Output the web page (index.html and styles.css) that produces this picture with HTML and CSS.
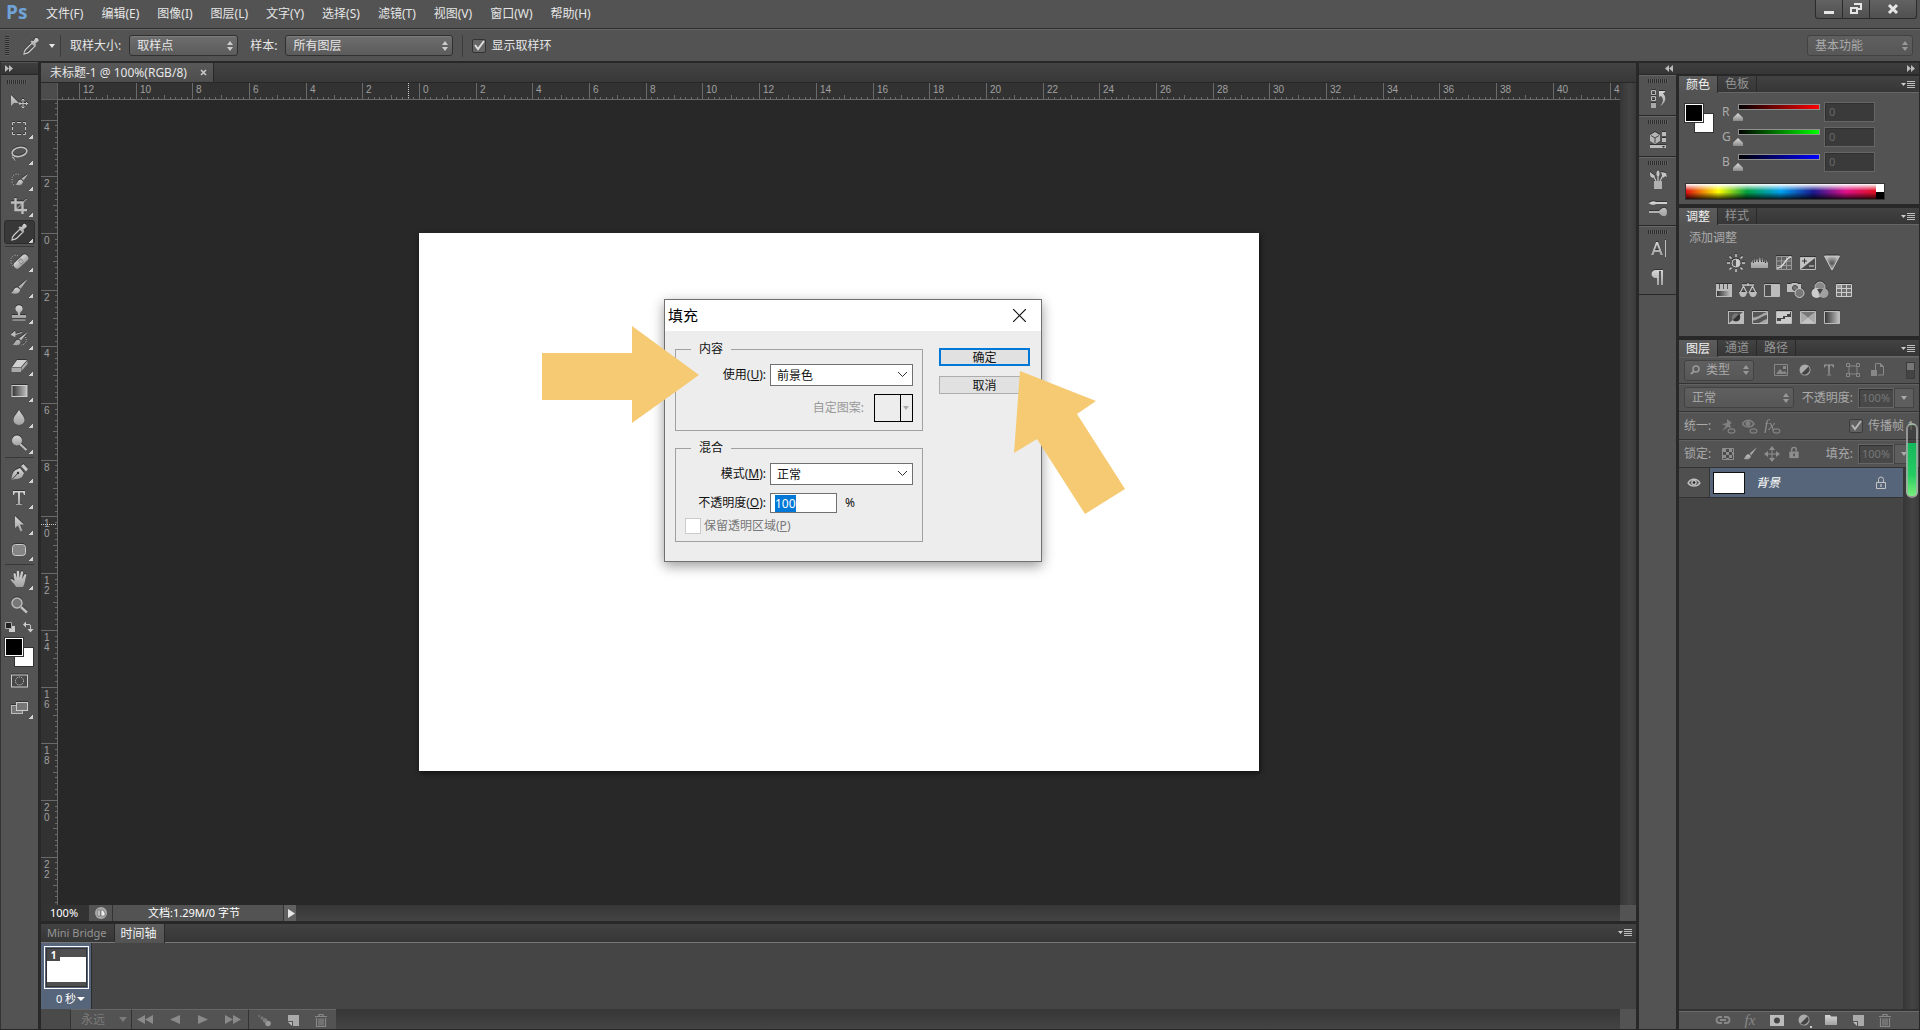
FILE: index.html
```html
<!DOCTYPE html>
<html lang="zh-CN">
<head>
<meta charset="utf-8">
<title>未标题-1</title>
<link rel="stylesheet" href="styles.css">
</head>
<body>
<svg class="defs" aria-hidden="true">
  <defs>
    <linearGradient id="lg" x1="0" y1="0" x2="0" y2="1"><stop offset="0" stop-color="#d6d6d6"/><stop offset="1" stop-color="#a2a2a2"/></linearGradient>
    <linearGradient id="hg" x1="0" y1="0" x2="1" y2="0"><stop offset="0" stop-color="#333"/><stop offset="1" stop-color="#c4c4c4"/></linearGradient>
    <symbol id="move" viewBox="0 0 20 20"><path d="M2 3v11l3-3h5z" fill="url(#lg)"/><path d="M14 7v9M10 11.500h9M12.500 8.500l1.500-1.500 1.500 1.500M12.500 14.500l1.500 1.500 1.500-1.500M11.500 10l-1.500 1.500 1.500 1.500M17 10l1.500 1.500-1.500 1.500" fill="none" stroke="#c4c4c4"/></symbol>
    <symbol id="marquee" viewBox="0 0 20 20"><path d="M3.500 7V4.500H6M8 4.500h4M14 4.500h2.500V7M16.500 9v3M16.500 14v2.500H14M12 16.500H8M6 16.500H3.500V14M3.500 12V9" fill="none" stroke="#c4c4c4"/></symbol>
    <symbol id="lasso" viewBox="0 0 20 20"><ellipse cx="10.500" cy="8" rx="7.500" ry="4.500" transform="rotate(-12 10 8)" fill="none" stroke="#c0c0c0" stroke-width="1.600"/><path d="M3 11c2 0 3 1 2 2.500s-2 0-1.500-1M4.500 13.500c1 1 .5 2 1.500 3" fill="none" stroke="#c0c0c0"/></symbol>
    <symbol id="quick" viewBox="0 0 20 20"><path d="M10 4.500a5 5 0 0 0-7 3v4a5 5 0 0 0 3 4" fill="none" stroke="#ccc" stroke-dasharray="1 1.500"/><path d="M19 4l-6.500 4.500 2 2z" fill="url(#lg)"/><path d="M12 9.500c-3 0-3 3-5.500 5 3 1.500 7 1 7.500-3z" fill="url(#lg)"/></symbol>
    <symbol id="crop" viewBox="0 0 20 20"><path d="M6.500 2v12H18M2 6.500h11.500V18" fill="none" stroke="#bdbdbd" stroke-width="2.400"/><path d="M6 14.500L17.500 3" stroke="#c0c0c0"/></symbol>
    <symbol id="dropper" viewBox="0 0 20 20"><path d="M3 18c0-3 1-4 2-5l6-6 3 3-6 6c-2 2-3 1-5 2z" fill="none" stroke="#ccc" stroke-width="1.200"/><path d="M9.500 5.500l1-1 2 .5 2-3c1-1 4 1 3 3l-3 2.500.8 1.800-1.200 1.200z" fill="url(#lg)"/></symbol>
    <symbol id="heal" viewBox="0 0 20 20"><path d="M9 4.500a5 5 0 0 0-7 3v4a5 5 0 0 0 3 4" fill="none" stroke="#ccc" stroke-dasharray="1 1.500"/><rect x="3.500" y="7" width="17" height="7" rx="3.200" transform="rotate(-42 12 10.500)" fill="url(#lg)"/><path d="M9 10l3-3 3 4-3 3z" fill="#8b8b8b"/><path d="M10.500 10.500h3M12 9v3" stroke="#ddd" stroke-dasharray="1 1"/></symbol>
    <symbol id="brush" viewBox="0 0 20 20"><path d="M18.500 2L9.500 9.500l2 2.500z" fill="url(#lg)"/><path d="M8.500 10.500C5 10 5 14 2 16c4 1.500 9 1 9-3.500z" fill="url(#lg)"/></symbol>
    <symbol id="stamp" viewBox="0 0 20 20"><path d="M8.500 9a3.600 3.600 0 1 1 3 0l-.5 3H17v3H3v-3h6z" fill="url(#lg)"/><path d="M3.500 17h13" stroke="#c4c4c4"/></symbol>
    <symbol id="history" viewBox="0 0 20 20"><path d="M18.500 3L10 9.500l2 2zM9.500 10.500c-3 0-3 3-6 5 4 1.500 8 1 8-3z" fill="url(#lg)"/><path d="M2 5.500l4-3v5zM5 5.500c4 0 6-2 8-2" fill="#bbb" stroke="#bbb"/><path d="M16.500 8c2 4 0 7-4 8" fill="none" stroke="#bbb" stroke-dasharray="1 1"/></symbol>
    <symbol id="eraser" viewBox="0 0 20 20"><path d="M8 5h10l-6 7H3z" fill="#d0d0d0"/><path d="M2.500 12.500H12V17H2.500zM12.500 12.500L18.500 5.500V9l-6 7z" fill="#a9a9a9"/></symbol>
    <symbol id="gradient" viewBox="0 0 20 20"><rect x="3" y="4.500" width="15" height="11" fill="url(#hg)" stroke="#d0d0d0"/></symbol>
    <symbol id="blur" viewBox="0 0 20 20"><path d="M10 2c0 3-5.500 6.500-5.500 11a5.500 5 0 0 0 11 0c0-4.500-5.500-8-5.500-11z" fill="url(#lg)"/></symbol>
    <symbol id="dodge" viewBox="0 0 20 20"><circle cx="8" cy="7.500" r="5" fill="url(#lg)"/><path d="M11 11l6.500 6" stroke="#c0c0c0" stroke-width="2"/></symbol>
    <symbol id="pen" viewBox="0 0 20 20"><path d="M2.500 18c0-4 1-8 4-10l4.500-2 4 5-2 4c-3 2.500-7 1.500-10.500 3z" fill="url(#lg)"/><path d="M12 4l2.500-2L19 7l-2 2.500z" fill="#c8c8c8"/><path d="M3 17.500l5.500-6" stroke="#444"/><circle cx="9" cy="11" r="1.200" fill="#333"/></symbol>
    <symbol id="type" viewBox="0 0 20 20"><path d="M4 3h12v4h-1l-1-2.500h-3V15.500l2 .5v1H7v-1l2-.5V4.500H6L5 7H4z" fill="url(#lg)"/></symbol>
    <symbol id="arrow" viewBox="0 0 20 20"><path d="M6 2v12l3-2.500 2.500 6 2-1-2.500-6h4z" fill="url(#lg)"/></symbol>
    <symbol id="rrect" viewBox="0 0 20 20"><rect x="3.500" y="4.500" width="13" height="11" rx="3" fill="#858585" stroke="#ccc"/></symbol>
    <symbol id="hand" viewBox="0 0 20 20"><path d="M7 18c-1-3-4-4.500-5.500-7.500 1-1.500 3 .5 4 1.500L4.500 5c.5-1.500 2-1 2.200 0L8 9l-.2-6.500c.5-1.500 2-1 2.200 0L10.500 9 12 3c.7-1.200 2-.6 2 .6L13 10l2.500-4.500c1-1 2-.2 1.700 1C16 11 16 15 14 18z" fill="url(#lg)"/></symbol>
    <symbol id="zoom" viewBox="0 0 20 20"><circle cx="8" cy="8" r="5" fill="#777" stroke="#bbb" stroke-width="1.500"/><path d="M12 12l6 5.500" stroke="#c0c0c0" stroke-width="2.400"/></symbol>
    <symbol id="mask" viewBox="0 0 20 20"><rect x="2.500" y="4" width="16" height="12" fill="#484848" stroke="#ccc"/><circle cx="10.500" cy="10" r="4" fill="none" stroke="#ddd" stroke-dasharray="1 1"/></symbol>
    <symbol id="screen" viewBox="0 0 20 20"><rect x="2.500" y="7.500" width="11" height="8" fill="#777" stroke="#bbb"/><rect x="7.500" y="4.500" width="11" height="8" fill="#777" stroke="#ccc"/></symbol>
    <symbol id="mini" viewBox="0 0 12 12"><path d="M5 5h6v6H5z" fill="#ccc"/><path d="M1.500 1.500h6v6h-6z" fill="#222" stroke="#aaa"/></symbol>
    <symbol id="swap" viewBox="0 0 12 12"><path d="M3.500 3.500H7q1.500 0 1.500 1.500v4" fill="none" stroke="#ccc"/><path d="M4 .5v6L1 3.500zM5.500 8h6l-3 3.500z" fill="#ccc"/></symbol>
    <symbol id="menu" viewBox="0 0 14 8"><path d="M0 2h5L2.500 5z" fill="#ccc"/><path d="M6 .5h8M6 2.500h8M6 4.500h8M6 6.500h8" stroke="#bdbdbd"/></symbol>
    <symbol id="hist" viewBox="0 0 20 20"><path d="M3.500 1.500h4v4h-4zM3.500 7.500h4v4h-4z" fill="none" stroke="#bbb"/><path d="M3 14h5v5H3z" fill="#aaa"/><path d="M11 2h6v1l-2 1.500C19 8 18 14 12 17c3-4 4-7 1-10l-2 1z" fill="url(#lg)"/></symbol>
    <symbol id="props" viewBox="0 0 20 20"><path d="M2 5l5-3 5 3v6l-5 3-5-3z" fill="#b5b5b5"/><path d="M3 5.500l4 2.500 4-2.500M7 8v5" fill="none" stroke="#444"/><path d="M14 2h4v4h-4zM14 8h4v4h-4zM2 15h16v3H2z" fill="#bbb"/><path d="M14 16h3l-1.500 2z" fill="#333"/></symbol>
    <symbol id="brushes" viewBox="0 0 20 20"><path d="M6 11h8v8H6z" fill="#b0b0b0"/><path d="M8 11L5 5M10 11V5M12 11l3-6" stroke="#bbb" stroke-width="1.500"/><path d="M2 2l5 4-2 2c-3-1-3-3-3-6zM10 0c2 2 2 4 1 6H9c-1-2-1-4 1-6zM13 2l5 1 1 4c-2-2-3 0-4 1z" fill="#c4c4c4"/></symbol>
    <symbol id="presets" viewBox="0 0 20 20"><path d="M0 5c3 0 4-3 8-1h11v2H8C4 8 3 6 0 5zM1 13h10c3-4 8-5 8 1s-5 5-8 1H1z" fill="url(#lg)"/></symbol>
    <symbol id="char" viewBox="0 0 20 20"><path d="M3 16L8 3h2l5 13h-2.500l-1-3H6.500l-1 3zM7 11h4L9 5.500z" fill="url(#lg)"/><path d="M17.500 1v17" stroke="#bbb"/></symbol>
    <symbol id="para" viewBox="0 0 20 20"><path d="M15 3H8c-6 0-6 8 0 8h1v7h2V4h2v14h2z" fill="url(#lg)"/></symbol>
    <symbol id="a1" viewBox="0 0 18 18"><circle cx="9" cy="9" r="4" fill="#555" stroke="#c8c8c8"/><path d="M9 5v8a4 4 0 0 0 0-8z" fill="#ccc"/><path d="M9 0v3M9 15v3M0 9h3M15 9h3M2.500 2.500l2 2M13.500 13.500l2 2M15.500 2.500l-2 2M2.500 15.500l2-2" stroke="#ccc" stroke-width="1.500"/></symbol>
    <symbol id="a2" viewBox="0 0 18 18"><path d="M0 14V7l1 2V5l1 4h1V4l1 4h1V4l1 4V4l1 4h1V2l1 5V3l1 5h1V3l1 5h1V5l1 4h1V5l1 4 1-2v7z" fill="url(#lg)"/></symbol>
    <symbol id="a3" viewBox="0 0 18 18"><path d="M1.500 2.500h15v13h-15zM6.500 2v13M11.500 2v13M2 7h15M2 11.500h15" fill="#626262" stroke="#999"/><path d="M2 14C10 14 9 4 16 3" fill="none" stroke="#ddd" stroke-width="1.500"/></symbol>
    <symbol id="a4" viewBox="0 0 18 18"><path d="M1 3h16v13H1z" fill="#4a4a4a"/><path d="M2 15V4h14z" fill="#c4c4c4"/><path d="M1.500 3.500h15v12h-15z" fill="none" stroke="#bbb"/><path d="M3 7h5M5.500 4.500v5" stroke="#333"/><path d="M10 12h5" stroke="#ddd"/></symbol>
    <radialGradient id="rg"><stop offset="0" stop-color="#555"/><stop offset="1" stop-color="#bbb"/></radialGradient>
    <symbol id="a5" viewBox="0 0 18 18"><path d="M1.500 2h15L9 16z" fill="url(#rg)" stroke="#ccc"/></symbol>
    <symbol id="b1" viewBox="0 0 18 18"><path d="M1 3h16v13H1z" fill="#bbb"/><path d="M2 10h14v5H2z" fill="url(#hg)"/><path d="M4.500 3v5M8.500 3v5M12.500 3v5" stroke="#555"/></symbol>
    <symbol id="b2" viewBox="0 0 18 18"><path d="M3 4h12M9 2v3M4.500 5L1 12M4.500 5L8 12M13.500 5L10 12M13.500 5l3.500 7" fill="none" stroke="#c4c4c4" stroke-width="1.300"/><path d="M0 11h8q-.5 5-4 5t-4-5zM10 11h8q-.5 5-4 5t-4-5z" fill="#bbb"/></symbol>
    <symbol id="b3" viewBox="0 0 18 18"><path d="M1.500 3.500h15v12h-15z" fill="#4d4d4d" stroke="#bbb"/><path d="M8 4h9v11H8z" fill="#bbb"/></symbol>
    <symbol id="b4" viewBox="0 0 18 18"><path d="M0 3h4l1-1h5l1 1h3v8H0z" fill="#bdbdbd"/><circle cx="8" cy="7" r="2.500" fill="#777" stroke="#444"/><circle cx="12.500" cy="12" r="4.500" fill="#777" stroke="#ccc"/></symbol>
    <symbol id="b5" viewBox="0 0 18 18"><circle cx="9" cy="6" r="5" fill="#888" stroke="#bbb"/><circle cx="5.500" cy="12" r="5" fill="#ccc"/><circle cx="12.500" cy="12" r="5" fill="#a0a0a0"/><path d="M6 8h6l-3 5z" fill="#444"/></symbol>
    <symbol id="b6" viewBox="0 0 18 18"><path d="M1.500 3.500h15v12h-15z" fill="#6d6d6d" stroke="#ccc"/><path d="M2 4h5v4H2z" fill="#999"/><path d="M6.500 3v12M11.500 3v12M2 7.500h15M2 11.500h15" stroke="#ccc"/></symbol>
    <symbol id="c1" viewBox="0 0 18 18"><path d="M1 3h16v13H1z" fill="#bbb"/><path d="M2 15V4h14z" fill="#555"/><circle cx="9" cy="9.500" r="4" fill="#777"/><path d="M6 12l6-6a4 4 0 0 1-6 6z" fill="#333"/></symbol>
    <symbol id="c2" viewBox="0 0 18 18"><path d="M1.500 3.500h15v12h-15z" fill="#555" stroke="#bbb"/><path d="M2 9.500c6 0 8-4 14-5.500v3c-6 1-8 5-14 5.500zM8 15c3-1 4-3 8-4v4z" fill="#a7a7a7"/></symbol>
    <symbol id="c3" viewBox="0 0 18 18"><path d="M1.500 3.500h15v12h-15z" fill="#444" stroke="#bbb"/><path d="M2 4h13v2h-3v2H8v2H2zM16 9v6H2v-2h4v-2h4V9z" fill="#ccc"/></symbol>
    <symbol id="c4" viewBox="0 0 18 18"><path d="M1.500 3.500h15v12h-15z" fill="#777" stroke="#bbb"/><path d="M2 4l7 5.500L2 15zM16 4L9 9.500l7 5.500z" fill="#aaa"/><path d="M2 15l7-5.500L16 15z" fill="#c4c4c4"/></symbol>
    <symbol id="c5" viewBox="0 0 18 18"><path d="M1.500 3.500h15v12h-15z" fill="url(#hg)" stroke="#bbb"/></symbol>
    <symbol id="pic" viewBox="0 0 16 16"><path d="M1.500 2.500h13v11h-13z" fill="none" stroke="#888"/><path d="M3 12l4-5 3 3 2-1 2 3zM10 4h3v3h-3z" fill="#888"/></symbol>
    <symbol id="adj" viewBox="0 0 16 16"><circle cx="8" cy="8" r="5.500" fill="#aaa"/><path d="M4.500 11.500l7-7a5 5 0 0 1-7 7z" fill="#444"/></symbol>
    <symbol id="shape" viewBox="0 0 16 16"><path d="M4 4h8v8H4z" fill="none" stroke="#888"/><path d="M1.500 1.500h3v3h-3zM11.500 1.500h3v3h-3zM1.500 11.500h3v3h-3zM11.500 11.500h3v3h-3z" fill="#555" stroke="#888"/></symbol>
    <symbol id="smart" viewBox="0 0 16 16"><path d="M6.500 8V1.500h5l3 3v8.500H9" fill="none" stroke="#888"/><path d="M11 1v4h4zM2 8h6v6H2z" fill="#888"/></symbol>
    <symbol id="chain" viewBox="0 0 16 16"><path d="M7 5H4.500a3 3 0 0 0 0 6H7M9 5h2.500a3 3 0 0 1 0 6H9M5 8h6" fill="none" stroke="#888" stroke-width="1.800"/></symbol>
    <symbol id="pin" viewBox="0 0 16 16"><path d="M7 1l5 4-2 1 1 4-3-1-6 4 4-5-4-2 5-1z" fill="#888"/><rect x="8" y="11" width="7" height="4" rx="2" fill="none" stroke="#999"/></symbol>
    <symbol id="eyelink" viewBox="0 0 16 16"><path d="M0 6c4-5 9-5 12 0-3 4-8 4-12 0z" fill="none" stroke="#888" stroke-width="1.500"/><circle cx="6" cy="5.500" r="2.500" fill="#888"/><rect x="8" y="11" width="7" height="4" rx="2" fill="#555" stroke="#999"/></symbol>
    <symbol id="linkbit" viewBox="0 0 16 16"><rect x="8" y="11" width="7" height="4" rx="2" fill="#555" stroke="#999"/></symbol>
    <symbol id="checks" viewBox="0 0 16 16"><path d="M2.500 2.500h11v11h-11z" fill="#4a4a4a" stroke="#999"/><path d="M3 3h3v3H3zM9 3h3v3H9zM6 6h3v3H6zM3 9h3v3H3zM9 9h3v3H9zM12 6h1v3h-1zM6 12h3v1H6z" fill="#999"/></symbol>
    <symbol id="cross" viewBox="0 0 16 16"><path d="M8 2v12M2 8h12" stroke="#999"/><path d="M8 0l3 4H5zM8 16l3-4H5zM0 8l4-3v6zM16 8l-4-3v6z" fill="#999"/></symbol>
    <symbol id="lock" viewBox="0 0 12 14"><path d="M3.500 6V4a2.500 2.500 0 0 1 5 0v2" fill="none" stroke="currentColor" stroke-width="1.500"/><path d="M1 6h10v7H1z" fill="currentColor"/><path d="M6 8v3" stroke="#444" stroke-width="1.500"/></symbol>
    <symbol id="lock2" viewBox="0 0 12 14"><path d="M3.500 6V3.500a2.500 2.500 0 0 1 5 0V6M1.500 6.500h9v6h-9z" fill="none" stroke="#c4c4c4"/><path d="M6 8v3" stroke="#ddd"/></symbol>
    <symbol id="eye" viewBox="0 0 14 12"><path d="M1 6c3-5 9-5 12 0-3 4-9 4-12 0z" fill="#555" stroke="#c0c0c0" stroke-width="1.300"/><circle cx="7" cy="5.500" r="2.800" fill="#bbb"/><circle cx="7" cy="5.500" r="1.300" fill="#222"/></symbol>
    <symbol id="maskadd" viewBox="0 0 16 16"><path d="M1 3h14v11H1z" fill="#bbb"/><circle cx="8" cy="8.500" r="3" fill="#444"/></symbol>
    <symbol id="folder" viewBox="0 0 16 16"><path d="M2 3h5l1 1.500h6V13H2z" fill="url(#lg)"/></symbol>
    <symbol id="newl" viewBox="0 0 16 16"><path d="M3 3h11v11H8V9H3z" fill="#aaa"/><path d="M3 10h4v4z" fill="#bbb"/></symbol>
    <symbol id="trash" viewBox="0 0 16 16"><path d="M2 4.500h12M6 4V2.500h4V4M3.500 6v8.500h9V6M6 6.500v7M8 6.500v7M10 6.500v7" fill="none" stroke="#888" stroke-width="1.200"/></symbol>
    <symbol id="tween" viewBox="0 0 16 16"><circle cx="12" cy="11.500" r="2.800" fill="#999"/><circle cx="9" cy="8.500" r="2.200" fill="#808080"/><circle cx="6" cy="6" r="1.700" fill="#747474"/><circle cx="3" cy="4" r="1.300" fill="#6a6a6a"/></symbol>
  </defs>
</svg>

<div class="app">
  <header class="menubar">
    <span class="logo">Ps</span>
    <nav class="menus">
      <button>文件(F)</button><button>编辑(E)</button><button>图像(I)</button><button>图层(L)</button><button>文字(Y)</button><button>选择(S)</button><button>滤镜(T)</button><button>视图(V)</button><button>窗口(W)</button><button>帮助(H)</button>
    </nav>
    <div class="winbtns">
      <button aria-label="最小化"><svg width="12" height="12"><path d="M1 8h10v3H1z" fill="#e6e6e6"/></svg></button>
      <button aria-label="还原"><svg width="14" height="12"><path d="M5 1h7v5H9M2 5h6v5H2z" fill="none" stroke="#e6e6e6" stroke-width="2"/></svg></button>
      <button class="winclose" aria-label="关闭"><svg width="12" height="12"><path d="M2 2l8 8M10 2l-8 8" stroke="#e6e6e6" stroke-width="3"/></svg></button>
    </div>
  </header>

  <div class="options">
    <i class="vgrip"></i>
    <svg class="ico optico"><use href="#dropper"/></svg>
    <i class="tri"></i>
    <i class="vsep"></i>
    <label for="size">取样大小:</label>
    <select id="size" class="sel w-size"><option>取样点</option></select>
    <label for="sample">样本:</label>
    <select id="sample" class="sel w-sample"><option>所有图层</option></select>
    <i class="vsep"></i>
    <label class="ring"><input type="checkbox" class="chk" checked>显示取样环</label>
    <select class="sel dim w-work" aria-label="工作区"><option>基本功能</option></select>
  </div>

  <div class="main">
    <aside class="tools">
      <div class="dockhead"><svg width="8" height="7"><path d="M0 0l4 3.500L0 7zM4 0l4 3.500L4 7z" fill="#bbb"/></svg></div>
      <i class="hgrip"></i>
      <div class="toollist">
        <button class="nosub" aria-label="移动"><svg class="ico"><use href="#move"/></svg></button>
        <button aria-label="选框"><svg class="ico"><use href="#marquee"/></svg></button>
        <button aria-label="套索"><svg class="ico"><use href="#lasso"/></svg></button>
        <button aria-label="快速选择"><svg class="ico"><use href="#quick"/></svg></button>
        <button aria-label="裁剪"><svg class="ico"><use href="#crop"/></svg></button>
        <button class="on" aria-label="吸管"><svg class="ico"><use href="#dropper"/></svg></button>
        <hr>
        <button aria-label="修复"><svg class="ico"><use href="#heal"/></svg></button>
        <button aria-label="画笔"><svg class="ico"><use href="#brush"/></svg></button>
        <button aria-label="图章"><svg class="ico"><use href="#stamp"/></svg></button>
        <button aria-label="历史画笔"><svg class="ico"><use href="#history"/></svg></button>
        <button aria-label="橡皮擦"><svg class="ico"><use href="#eraser"/></svg></button>
        <button aria-label="渐变"><svg class="ico"><use href="#gradient"/></svg></button>
        <button aria-label="模糊"><svg class="ico"><use href="#blur"/></svg></button>
        <button aria-label="减淡"><svg class="ico"><use href="#dodge"/></svg></button>
        <hr>
        <button aria-label="钢笔"><svg class="ico"><use href="#pen"/></svg></button>
        <button aria-label="文字"><svg class="ico"><use href="#type"/></svg></button>
        <button aria-label="路径选择"><svg class="ico"><use href="#arrow"/></svg></button>
        <button aria-label="圆角矩形"><svg class="ico"><use href="#rrect"/></svg></button>
        <hr>
        <button aria-label="抓手"><svg class="ico"><use href="#hand"/></svg></button>
        <button class="nosub" aria-label="缩放"><svg class="ico"><use href="#zoom"/></svg></button>
      </div>
      <div class="miniswatch"><svg width="12" height="12"><use href="#mini"/></svg><svg width="12" height="12"><use href="#swap"/></svg></div>
      <div class="fgbg"><i class="bg"></i><i class="fg"></i></div>
      <div class="toollist modes">
        <button class="nosub" aria-label="快速蒙版"><svg class="ico"><use href="#mask"/></svg></button>
        <button aria-label="屏幕模式"><svg class="ico"><use href="#screen"/></svg></button>
      </div>
    </aside>

    <section class="doc">
      <div class="doctabs"><div class="doctab">未标题-1 @ 100%(RGB/8)<button aria-label="关闭"><svg width="7" height="7"><path d="M1 1l5 5M6 1L1 6" stroke="#ccc" stroke-width="1.500"/></svg></button></div></div>
      <div class="view">
        <div class="corner"></div>
        <svg class="hruler" id="hruler"></svg>
        <svg class="vruler" id="vruler"></svg>
        <div class="work"><div class="paper"></div></div>
        <div class="vscroll"></div>
      </div>
      <div class="status">
        <span class="pct">100%</span>
        <button class="adobe" aria-label="预览"><svg width="12" height="12"><circle cx="6" cy="6" r="6" fill="#a9a9a9"/><path d="M3 3h2v6H3zM6 3h2l2 3v3H6z" fill="#eee" stroke="#555" stroke-width=".6"/></svg></button>
        <span class="docinfo">文档:1.29M/0 字节</span>
        <button class="statarrow" aria-label="更多"><svg width="7" height="9"><path d="M0 0l7 4.500L0 9z" fill="#e6e6e6"/></svg></button>
        <div class="hscroll"></div><i class="sq"></i>
      </div>
      <div class="tabs tl"><button>Mini Bridge</button><button class="cur">时间轴</button><svg class="pmenu"><use href="#menu"/></svg></div>
      <div class="frames">
        <div class="frame"><div class="thumb"><b>1</b></div><button class="delay">0 秒<i class="tri"></i></button></div>
      </div>
      <div class="tlfoot">
        <i class="pad"></i>
        <button class="grp forever">永远<i class="tri"></i></button>
        <div class="grp play">
          <button aria-label="首帧"><svg width="16" height="9"><path d="M8 0v9L0 4.500zM16 0v9L8 4.500z" fill="#8a8a8a"/></svg></button>
          <button aria-label="上一帧"><svg width="10" height="9"><path d="M10 0v9L0 4.500z" fill="#8a8a8a"/></svg></button>
          <button aria-label="播放"><svg width="10" height="9"><path d="M0 0v9l10-4.500z" fill="#8a8a8a"/></svg></button>
          <button aria-label="下一帧"><svg width="16" height="9"><path d="M0 0v9l8-4.500zM8 0v9l8-4.500z" fill="#8a8a8a"/></svg></button>
        </div>
        <div class="grp edit">
          <button aria-label="过渡"><svg class="i16"><use href="#tween"/></svg></button>
          <button aria-label="复制帧"><svg class="i16"><use href="#newl"/></svg></button>
          <button aria-label="删除帧"><svg class="i16"><use href="#trash"/></svg></button>
        </div>
        <div class="hscroll"></div><i class="sq"></i>
      </div>
    </section>

    <div class="dock">
      <div class="dockhead"><svg class="lt" width="8" height="7"><path d="M4 0L0 3.500 4 7zM8 0L4 3.500 8 7z" fill="#bbb"/></svg><svg width="8" height="7"><path d="M0 0l4 3.500L0 7zM4 0l4 3.500L4 7z" fill="#bbb"/></svg></div>
      <div class="dockbody">
        <div class="icons">
          <div class="ig"><i class="hgrip"></i><button aria-label="历史记录"><svg class="ico"><use href="#hist"/></svg></button></div>
          <div class="ig"><i class="hgrip"></i><button aria-label="属性"><svg class="ico"><use href="#props"/></svg></button></div>
          <div class="ig"><i class="hgrip"></i><button aria-label="画笔预设"><svg class="ico"><use href="#brushes"/></svg></button><button aria-label="画笔"><svg class="ico"><use href="#presets"/></svg></button></div>
          <div class="ig"><i class="hgrip"></i><button aria-label="字符"><svg class="ico"><use href="#char"/></svg></button><button aria-label="段落"><svg class="ico"><use href="#para"/></svg></button></div>
        </div>
        <div class="panels">
          <section class="panel">
            <div class="tabs"><button class="cur">颜色</button><button>色板</button><svg class="pmenu"><use href="#menu"/></svg></div>
            <div class="color">
              <div class="fgbg big"><i class="bg"></i><i class="fg"></i></div>
              <div class="sliders">
                <div class="srow"><label for="r">R</label><input class="range red" type="range" min="0" max="255" value="0" aria-label="R"><input id="r" class="num" value="0"></div>
                <div class="srow"><label for="g">G</label><input class="range green" type="range" min="0" max="255" value="0" aria-label="G"><input id="g" class="num" value="0"></div>
                <div class="srow"><label for="b">B</label><input class="range blue" type="range" min="0" max="255" value="0" aria-label="B"><input id="b" class="num" value="0"></div>
              </div>
            </div>
            <div class="spectrum"><i class="hues"></i><i class="bw"></i></div>
          </section>
          <section class="panel adjust">
            <div class="tabs"><button class="cur">调整</button><button>样式</button><svg class="pmenu"><use href="#menu"/></svg></div>
            <p>添加调整</p>
            <div class="arow"><svg><use href="#a1"/></svg><svg><use href="#a2"/></svg><svg><use href="#a3"/></svg><svg><use href="#a4"/></svg><svg><use href="#a5"/></svg></div>
            <div class="arow"><svg><use href="#b1"/></svg><svg><use href="#b2"/></svg><svg><use href="#b3"/></svg><svg><use href="#b4"/></svg><svg><use href="#b5"/></svg><svg><use href="#b6"/></svg></div>
            <div class="arow"><svg><use href="#c1"/></svg><svg><use href="#c2"/></svg><svg><use href="#c3"/></svg><svg><use href="#c4"/></svg><svg><use href="#c5"/></svg></div>
          </section>
          <section class="panel layers">
            <div class="tabs"><button class="cur">图层</button><button>通道</button><button>路径</button><svg class="pmenu"><use href="#menu"/></svg></div>
            <div class="lrow filter">
              <div class="kind"><svg width="10" height="10"><circle cx="6" cy="4" r="3" fill="none" stroke="#999" stroke-width="1.500"/><path d="M4 6L1 9" stroke="#999" stroke-width="2"/></svg><select class="sel dim w-kind" aria-label="类型"><option>类型</option></select></div>
              <div class="ficons"><svg class="i16"><use href="#pic"/></svg><svg class="i16"><use href="#adj"/></svg><svg class="i16 faint"><use href="#type"/></svg><svg class="i16"><use href="#shape"/></svg><svg class="i16"><use href="#smart"/></svg></div>
              <i class="toggle"></i>
            </div>
            <div class="lrow">
              <select class="sel dim w-blend" aria-label="混合模式"><option>正常</option></select>
              <label class="end" for="op">不透明度:</label><input id="op" class="num pc" value="100%"><button class="drop" aria-label="不透明度"><i class="tri"></i></button>
            </div>
            <div class="lrow">
              <span>统一:</span><div class="licons uni"><svg class="i16"><use href="#pin"/></svg><svg class="i16"><use href="#eyelink"/></svg><span class="fxl">fx<svg class="i16"><use href="#linkbit"/></svg></span></div>
              <label class="end prop"><input type="checkbox" class="chk soft" checked>传播帧 1</label>
            </div>
            <div class="lrow">
              <span>锁定:</span><div class="licons"><svg class="i16"><use href="#checks"/></svg><svg class="i16"><use href="#brush"/></svg><svg class="i16"><use href="#cross"/></svg><svg class="i16 grey"><use href="#lock"/></svg></div>
              <label class="end" for="fill">填充:</label><input id="fill" class="num pc" value="100%"><button class="drop" aria-label="填充"><i class="tri"></i></button>
            </div>
            <div class="list">
              <div class="items"><div class="layer"><button class="vis" aria-label="可见"><svg width="14" height="12"><use href="#eye"/></svg></button><div class="lname"><i class="lthumb"></i><em>背景</em><svg width="12" height="14"><use href="#lock2"/></svg></div></div></div>
              <i class="vscroll"></i>
            </div>
            <div class="lfoot">
              <button aria-label="链接"><svg class="i16"><use href="#chain"/></svg></button><button class="fx">fx</button><button aria-label="蒙版"><svg class="i16"><use href="#maskadd"/></svg></button><button class="sub" aria-label="调整图层"><svg class="i16"><use href="#adj"/></svg></button><button aria-label="组"><svg class="i16"><use href="#folder"/></svg></button><button aria-label="新建"><svg class="i16"><use href="#newl"/></svg></button><button aria-label="删除"><svg class="i16"><use href="#trash"/></svg></button>
            </div>
            <i class="meter"></i>
          </section>
        </div>
      </div>
    </div>
  </div>
</div>

<form class="dialog" role="dialog" aria-label="填充">
  <div class="dtitle"><span>填充</span><button type="button" aria-label="关闭"><svg width="13" height="13"><path d="M0 0l13 13M13 0L0 13" stroke="#111" stroke-width="1.200"/></svg></button></div>
  <div class="dbody">
    <div class="fields">
      <fieldset class="fs1">
        <legend>内容</legend>
        <div class="frow"><label for="use">使用(<u>U</u>):</label><select id="use" class="dsel"><option>前景色</option></select></div>
        <div class="frow pat"><span>自定图案:</span><button type="button" class="pattern" disabled aria-label="自定图案"><i></i><i class="tri"></i></button></div>
      </fieldset>
      <fieldset class="fs2">
        <legend>混合</legend>
        <div class="frow"><label for="mode">模式(<u>M</u>):</label><select id="mode" class="dsel"><option>正常</option></select></div>
        <div class="frow"><label for="dop">不透明度(<u>O</u>):</label><input id="dop" class="dnum" value="100"><span>%</span></div>
        <label class="keep"><input type="checkbox" disabled><span>保留透明区域(<u>P</u>)</span></label>
      </fieldset>
    </div>
    <div class="dbtns"><button type="button" class="ok">确定</button><button type="button">取消</button></div>
  </div>
</form>

<svg class="pointers" aria-hidden="true" width="600" height="200">
  <path d="M12 33h90V6l67 49-67 48V80H12z" fill="#f5ca73"/>
  <path d="M490 51l76 30-19 13 48 75-40 25-48-75-23 14z" fill="#f5ca73"/>
</svg>
<script src="rulers.js"></script>
</body>
</html>
```
FILE: rulers.js
```js
// Rulers in centimetres at 72 dpi; a labelled tick every 2 cm.
const STEP = 144 / 2.54;
const NS = 'http://www.w3.org/2000/svg';

function add(svg, name, attrs, text) {
  const el = document.createElementNS(NS, name);
  for (const k in attrs) el.setAttribute(k, attrs[k]);
  if (text) el.textContent = text;
  svg.appendChild(el);
}

function ruler(svg, origin, horizontal, cursor) {
  svg.textContent = '';
  const length = horizontal ? svg.clientWidth : svg.clientHeight;
  const first = Math.floor(-origin / STEP) * 10;
  for (let i = first; origin + i * STEP / 10 < length; i++) {
    const p = Math.round(origin + i * STEP / 10);
    if (p < 0) continue;
    const size = i % 10 === 0 ? 17 : i % 5 === 0 ? 5 : 3;
    add(svg, 'rect', horizontal
      ? { x: p, y: 17 - size, width: 1, height: size, fill: '#6a6a6a' }
      : { x: 17 - size, y: p, width: size, height: 1, fill: '#6a6a6a' });
    if (i % 10 !== 0) continue;
    const label = String(Math.abs(i / 5));
    if (horizontal) add(svg, 'text', { x: p + 4, y: 10 }, label);
    else [...label].forEach((d, n) => add(svg, 'text', { x: 3, y: p + 11 + n * 10 }, d));
  }
  add(svg, 'path', horizontal
    ? { d: `M${cursor}.5 0V17`, stroke: '#ccc', 'stroke-dasharray': '1 1' }
    : { d: `M0 ${cursor}.5H17`, stroke: '#ccc', 'stroke-dasharray': '1 1' });
}

function draw() {
  ruler(document.getElementById('hruler'), 361, true, 350);
  ruler(document.getElementById('vruler'), 133, false, 424);
}
draw();
addEventListener('resize', draw);
const opacity = document.getElementById('dop');
opacity.focus({ preventScroll: true });
opacity.select();
```
FILE: styles.css
```css
* { box-sizing: border-box; }
body { margin: 0; height: 100vh; overflow: hidden; background: #282828; color: #e6e6e6; font: 12px/16px "Noto Sans", "Noto Sans CJK SC", sans-serif; }
button, input, select { font: inherit; color: inherit; margin: 0; }
button { border: 0; padding: 0; background: none; display: flex; align-items: center; justify-content: center; }
svg { display: block; flex: none; }
i { display: block; flex: none; }
.defs { position: absolute; width: 0; height: 0; }
.ico { width: 20px; height: 20px; filter: drop-shadow(0 -1px 0 #333); }
.i16 { width: 16px; height: 16px; }
.tri { width: 0; height: 0; border: 3px solid transparent; border-top: 4px solid currentColor; border-bottom: 0; }

.app { height: 100%; display: flex; flex-direction: column; padding-bottom: 1px; }
.menubar { height: 28px; flex: none; display: flex; background: #535353; }
.logo { width: 38px; padding-left: 6px; font: bold 19px/25px "Open Sans", sans-serif; color: #6fa3d8; }
.menus { display: flex; gap: 18px; padding: 0 0 1px 8px; flex: 1; }
.winbtns { display: flex; height: 19px; margin-right: 3px; border: 1px solid #2c2c2c; border-top: 0; border-radius: 0 0 3px 3px; background: linear-gradient(#626262, #505050); }
.winbtns button { width: 27px; border-right: 1px solid #2c2c2c; }
.winbtns .winclose { width: 46px; border: 0; }

.options { height: 34px; flex: none; display: flex; align-items: center; background: #535353; border-top: 1px solid #2e2e2e; border-bottom: 1px solid #282828; box-shadow: inset 0 1px #666; padding: 1px 7px 0 5px; }
.vgrip { width: 4px; height: 20px; background: repeating-linear-gradient(#2c2c2c 0 1px, #606060 1px 2px); }
.optico { margin: 0 8px 0 12px; }
.vsep { width: 1px; height: 22px; background: #3c3c3c; margin-left: 5px; margin-right: 9px; }
.options label { margin-right: 8px; }
.sel { appearance: none; height: 21px; border: 1px solid #303030; border-radius: 3px; padding: 0 7px; outline: 0; background: url("data:image/svg+xml,%3Csvg xmlns='http://www.w3.org/2000/svg' width='6' height='10'%3E%3Cpath d='M0 4l3-4 3 4zM0 6l3 4 3-4z' fill='%23ccc'/%3E%3C/svg%3E") no-repeat right 4px center, linear-gradient(#6e6e6e, #5b5b5b); box-shadow: inset 0 1px #7b7b7b; }
.dim { color: #aaa; border-color: #424242; background-image: url("data:image/svg+xml,%3Csvg xmlns='http://www.w3.org/2000/svg' width='6' height='10'%3E%3Cpath d='M0 4l3-4 3 4zM0 6l3 4 3-4z' fill='%23999'/%3E%3C/svg%3E"), linear-gradient(#5f5f5f, #575757); box-shadow: none; }
.w-size { width: 109px; margin-right: 12px; }
.w-sample { width: 168px; margin-right: 4px; }
.w-work { width: 106px; margin-left: auto; }
.ring { display: flex; align-items: center; gap: 5px; }
.chk { appearance: none; width: 14px; height: 14px; border: 1px solid #333; border-radius: 2px; background: url("data:image/svg+xml,%3Csvg xmlns='http://www.w3.org/2000/svg' width='12' height='12'%3E%3Cpath d='M2 5l3 4 6-8' fill='none' stroke='%23ddd' stroke-width='2'/%3E%3C/svg%3E") center, #666; }
.soft { opacity: .7; }

.main { flex: 1; min-height: 0; display: flex; }
.dockhead { height: 12px; flex: none; display: flex; align-items: center; justify-content: space-between; background: linear-gradient(#3f3f3f, #353535); border-bottom: 1px solid #282828; padding: 0 4px; }
.tools { width: 38px; flex: none; margin-right: 3px; border-left: 1px solid #333; background: #535353; display: flex; flex-direction: column; padding-top: 1px; }
.tools .dockhead { margin-bottom: 5px; }
.hgrip { width: 20px; height: 4px; flex: none; align-self: center; background: repeating-linear-gradient(90deg, #2c2c2c 0 1px, #606060 1px 2px); }
.tools > .hgrip { margin-left: -6px; margin-bottom: 5px; }
.toollist { display: flex; flex-direction: column; }
.modes { margin-top: 1px; gap: 1px; }
.toollist button { height: 26px; width: 31px; margin-left: 3px; padding-right: 2px; border-radius: 3px; background: linear-gradient(135deg, transparent 50%, #d4d4d4 50%) no-repeat 25px 20px / 4px 4px; }
.toollist .nosub { background: none; }
.toollist .on { height: 24px; margin-top: 1px; margin-bottom: 1px; border: 1px solid #2c2c2c; background-color: #383838; background-position: 24px 18px; }
.toollist hr { height: 1px; width: 29px; margin: 1px 0 1px 4px; border: 0; background: #383838; }
.miniswatch { height: 18px; display: flex; gap: 6px; padding: 3px 0 0 3px; }
.fgbg { display: grid; grid-template: 10px 20px / 10px 20px; margin: 1px 0 0 3px; }
.fg, .bg { width: 20px; height: 20px; border: 1px solid #333; }
.fg { grid-area: 1 / 1; background: #000; box-shadow: inset 0 0 0 1px #fff; }
.bg { grid-area: 2 / 2; background: #fff; }

.doc { flex: 1; min-width: 0; display: flex; flex-direction: column; margin-right: 3px; }
.doctabs { height: 21px; flex: none; display: flex; background: linear-gradient(#434343, #383838); border-bottom: 1px solid #282828; border-top: 1px solid #282828; }
.doctab { display: flex; align-items: center; gap: 7px; width: 173px; padding: 0 6px 0 9px; white-space: nowrap; background: linear-gradient(#585858, #4e4e4e); border-right: 1px solid #282828; justify-content: space-between; }
.view { flex: 1; min-height: 0; display: grid; grid-template: 17px 1fr / 17px 1fr 16px; background: #282828; }
.corner { background: #4c4c4c; border: solid #5e5e5e; border-width: 0 1px 1px 0; }
.hruler, .vruler { width: 100%; height: 100%; overflow: hidden; background: #323232; font: 10px "Liberation Sans", sans-serif; fill: #a0a0a0; min-height: 0; }
.hruler { border-bottom: 1px solid #6a6a6a; }
.vruler { grid-area: 2 / 1; border-right: 1px solid #6a6a6a; }
.work { position: relative; grid-area: 2 / 2; overflow: hidden; min-height: 0; }
.paper { position: absolute; left: 361px; top: 133px; width: 840px; height: 538px; background: #fff; box-shadow: 1px 2px 5px #111; }
.vscroll { width: 16px; background: linear-gradient(90deg, #363636, #444 60%, #3a3a3a); }
.view .vscroll { grid-area: 1 / 3 / 3 / 4; }
.status { height: 16px; flex: none; display: flex; background: #3a3a3a; line-height: 15px; font-size: 11px; color: #fff; }
.pct { width: 48px; padding-left: 9px; background: #333; }
.adobe { width: 24px; background: #535353; border-right: 1px solid #333; }
.docinfo { width: 171px; padding-right: 8px; text-align: center; background: #535353; border-right: 1px solid #333; }
.statarrow { width: 12px; background: #606060; padding-left: 3px; }
.hscroll { flex: 1; background: linear-gradient(#363636, #444); }
.sq { width: 16px; background: #535353; }
.tabs { height: 18px; flex: none; display: flex; background: linear-gradient(#424242, #363636); border-top: 1px solid #282828; border-bottom: 1px solid #666; color: #949494; }
.tabs button { padding: 0 8px; border-right: 1px solid #2a2a2a; }
.tabs .cur { background: linear-gradient(#5c5c5c, #535353); color: #f2f2f2; margin-bottom: -1px; }
.panels .tabs button { padding: 0 7px; }
.pmenu { width: 14px; height: 8px; margin: 5px 4px 0 auto; }
.tl { margin-top: 2px; height: 20px; border-bottom-color: #777; }
.tl button { font-size: 11px; padding: 0 7px 0 6px; }
.tl .cur { font-size: 12px; }
.frames { height: 66px; flex: none; background: #454545; }
.frame { width: 51px; height: 66px; background: #566579; border-right: 1px solid #2c2c2c; padding: 3px 3px 2px; display: flex; flex-direction: column; color: #fff; }
.thumb { width: 45px; height: 46px; border: 1px solid #fff; box-shadow: inset 0 0 0 1px #566579, inset 0 0 0 2px #333; background: linear-gradient(#505050 10px, #fff 10px 35px, #505050 35px); }
.thumb b { display: block; width: 13px; height: 12px; margin: 2px; background: #4a4a4a; font-size: 10px; line-height: 12px; text-align: center; }
.delay { flex: 1; font-size: 11px; padding: 2px 0 0 9px; gap: 1px; }
.delay .tri { border-width: 4px 4px 0; }
.tlfoot { height: 20px; flex: none; display: flex; background: #3a3a3a; color: #888; }
.pad { width: 29px; background: #4a4a4a; }
.grp { display: flex; align-items: center; background: #535353; border-left: 1px solid #333; border-top: 1px solid #666; }
.forever { width: 61px; padding: 0 4px 0 10px; justify-content: space-between; color: #7a7a7a; }
.forever .tri { border-width: 5px 4px 0; }
.play { width: 117px; justify-content: space-between; padding: 0 7px 0 5px; }
.edit { width: 88px; justify-content: space-between; padding: 0 7px; }

.dock { width: 281px; flex: none; display: flex; flex-direction: column; padding: 1px 1px 0 0; }
.dock .lt { margin-left: 22px; }
.dockbody { flex: 1; min-height: 0; display: flex; gap: 3px; }
.icons { width: 37px; flex: none; background: #535353; }
.ig { display: flex; flex-direction: column; align-items: center; gap: 6px; height: 41px; padding-top: 4px; border-bottom: 1px solid #282828; box-shadow: inset 0 1px #666; }
.ig:nth-child(n+3) { height: 69px; gap: 8px; }
.ig:nth-child(n+3) .hgrip { margin-bottom: -3px; }
.panels { flex: 1; min-width: 0; display: flex; flex-direction: column; gap: 3px; position: relative; }
.panel { background: #535353; flex: none; height: 129px; }
.color { display: flex; padding: 10px 0 0 5px; height: 90px; }
.big { margin: 0 8px 0 0; align-self: start; }
.srow { display: flex; align-items: center; height: 25px; color: #aaa; }
.srow label { width: 16px; }
.sliders { margin-top: -4px; }
.range { appearance: none; width: 82px; height: 20px; margin: 0 4px 0 0; background: linear-gradient(90deg, #000, var(--c)) no-repeat 1px 3px / 80px 4px, linear-gradient(#909090, #909090) no-repeat 0 2px / 82px 6px; outline: 0; overflow: visible; }
.range::-webkit-slider-thumb { appearance: none; width: 10px; height: 8px; margin: 11px 0 0 -5px; background: linear-gradient(#ddd, #888); clip-path: polygon(50% 0, 100% 60%, 100% 100%, 0 100%, 0 60%); }
.red { --c: #f00; } .green { --c: #0f0; } .blue { --c: #00f; }
.num { width: 51px; height: 20px; border: 1px solid #666; background: #3a3a3a; color: #686868; padding: 0 4px; border-radius: 0; outline: 0; font-size: 11px; box-shadow: inset 1px 1px #303030; }
.spectrum { margin: 0 0 0 6px; width: 200px; height: 17px; border: 1px solid #333; display: flex; }
.hues { flex: 1; background: linear-gradient(#fff, #fff0 45%, #0000 55%, #000c), linear-gradient(90deg, #e01010, #ff0 17%, #00a040 32%, #00a0f0 50%, #1a1a90 67%, #e0108a 84%, #e01020); }
.bw { width: 8px; background: linear-gradient(#fff 50%, #000 50%); }
.adjust p { margin: 5px 0 8px 10px; color: #aaa; }
.arow { display: flex; gap: 6px; height: 27px; width: 124px; margin-left: 43px; justify-content: center; }
.arow svg { width: 18px; height: 18px; filter: drop-shadow(0 -1px 0 #333); }
.layers { flex: 1; min-height: 0; display: flex; flex-direction: column; }
.lrow { height: 28px; flex: none; display: flex; align-items: center; padding: 0 5px; border-bottom: 1px solid #333; box-shadow: inset 0 1px #606060; color: #aaa; }
.filter { padding-right: 4px; height: 27px; }
.kind { display: grid; align-items: center; }
.kind > * { grid-area: 1 / 1; }
.kind svg { z-index: 1; margin-left: 6px; }
.w-kind { width: 70px; padding-left: 21px; }
.w-blend { width: 110px; }
.ficons { display: flex; gap: 8px; margin-left: 19px; }
.faint { opacity: .6; }
.grey { color: #999; height: 13px; }
.toggle { width: 9px; height: 17px; margin-left: auto; border: 1px solid #3c3c3c; background: linear-gradient(#777 50%, #444 50%); }
.end { margin-left: auto; margin-right: 5px; white-space: nowrap; }
.pc { width: 36px; padding: 0 3px; background: #484848; color: #777; }
.drop { width: 20px; height: 20px; border: 1px solid #444; background: #5e5e5e; }
.licons { display: flex; gap: 6px; margin-left: 9px; color: #999; opacity: .85; }
.fxl { display: flex; font: italic 15px/14px "Liberation Serif", serif; }
.fxl svg { margin-left: -10px; }
.prop { display: flex; align-items: center; gap: 5px; margin-right: 0; }
.list { flex: 1; min-height: 0; display: flex; background: #454545; border-bottom: 2px solid #333; }
.items { flex: 1; }
.layer { display: flex; height: 30px; border-bottom: 1px solid #333; }
.vis { width: 31px; background: #4f4f4f; border-right: 1px solid #333; }
.lname { flex: 1; display: flex; align-items: center; padding: 0 16px 0 3px; background: #566579; color: #fff; }
.lthumb { width: 32px; height: 22px; background: #fff; border: 1px solid #111; margin-right: 11px; }
.lname svg { margin-left: auto; }
.lfoot { height: 18px; flex: none; display: flex; gap: 11px; justify-content: flex-end; padding-right: 26px; align-items: center; box-shadow: inset 0 1px #6a6a6a; }
.sub { background: linear-gradient(#ccc, #ccc) no-repeat right bottom / 2px 2px; }
.fx { width: 16px; font: italic 15px/16px "Liberation Serif", serif; color: #888; }
.meter { position: absolute; right: 1px; top: 348px; width: 12px; height: 75px; border: 2px solid #aaac; border-radius: 6px; background: linear-gradient(#3338 25%, #15b85c 25%, #25cc62 70%, #78f07c); }

.dialog { position: absolute; left: 664px; top: 299px; width: 378px; height: 263px; background: #ededed; border: 1px solid #707070; box-shadow: 0 4px 12px #0006; color: #111; }
.dtitle { height: 31px; background: #fff; display: flex; align-items: center; justify-content: space-between; padding: 0 15px 1px 3px; font-size: 15px; color: #000; }
.dbody { display: flex; gap: 16px; padding: 10px 11px 10px 10px; }
.fields { width: 248px; flex: none; display: flex; flex-direction: column; gap: 9px; }
fieldset { margin: 0; padding: 7px 9px 0; border: 1px solid #a0a0a0; min-width: 0; }
.fs1 { height: 90px; }
.fs2 { height: 102px; }
legend { margin-left: 6px; padding: 0 8px; line-height: 16px; }
.frow { display: flex; align-items: center; justify-content: flex-end; height: 22px; gap: 4px; }
.frow label { margin-left: auto; }
.dsel { appearance: none; width: 143px; height: 22px; border: 1px solid #707070; border-radius: 0; padding: 1px 6px 0; background: url("data:image/svg+xml,%3Csvg xmlns='http://www.w3.org/2000/svg' width='9' height='6'%3E%3Cpath d='M0 0l4.500 4.500L9 0' fill='none' stroke='%23333'/%3E%3C/svg%3E") no-repeat right 5px center, #fff; }
.pat { height: 28px; margin-top: 8px; color: #999; gap: 10px; }
.pattern { width: 39px; height: 28px; border: 1px solid #000; color: #aaa; justify-content: space-between; padding-right: 3px; }
.pattern i:first-child { width: 26px; height: 26px; border-right: 1px solid #000; }
.fs2 .frow + .frow { margin-top: 7px; }
.dnum { width: 67px; height: 20px; border: 1px solid #707070; border-radius: 0; padding: 0 4px; background: #fff; outline: 0; }
.dnum::selection { background: #0078d7; color: #fff; }
.frow .dnum + span { width: 72px; padding-left: 4px; }
.keep { display: flex; align-items: center; gap: 3px; margin-top: 4px; color: #777; }
.keep input { appearance: none; width: 16px; height: 16px; border: 1px solid #ccc; background: #fff; }
.dbtns { flex: 1; display: flex; flex-direction: column; gap: 10px; padding-top: 7px; }
.dbtns button { height: 18px; padding-top: 2px; border: 1px solid #adadad; background: #e1e1e1; }
.dbtns .ok { border: 2px solid #0078d7; }
.pointers { position: absolute; left: 530px; top: 320px; pointer-events: none; }
```
